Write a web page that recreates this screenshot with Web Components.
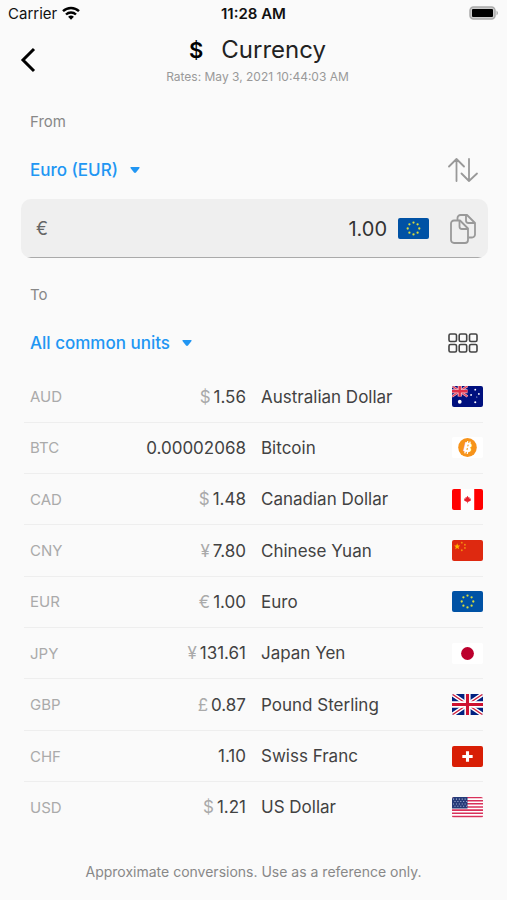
<!DOCTYPE html>
<html lang="en">
<head>
<meta charset="utf-8">
<meta name="viewport" content="width=device-width, initial-scale=1">
<title>Currency</title>
<style>
  body {
    margin: 0;
    background: #fafafa;
    color: #424242;
    font-family: Inter, "Liberation Sans", sans-serif;
    font-size: 17px;
  }
</style>
</head>
<body>
<status-bar carrier="Carrier" time="11:28 AM"></status-bar>
<page-header>
  <span slot="icon">$</span>
  Currency
  <span slot="subtitle">Rates: May 3, 2021 10:44:03 AM</span>
</page-header>
<main>
  <unit-picker label="From" unit="Euro (EUR)">
    <icon-button slot="action" icon="swap" label="Swap units"></icon-button>
    <amount-field symbol="€" value="1.00" flag="eu"></amount-field>
  </unit-picker>
  <unit-picker label="To" unit="All common units">
    <icon-button slot="action" icon="grid" label="Show keypad"></icon-button>
    <rate-table></rate-table>
  </unit-picker>
</main>
<page-footer>Approximate conversions. Use as a reference only.</page-footer>

<script>
const ICONS = {
  back: `<svg width="16" height="26" viewBox="0 0 16 26" fill="none" stroke="#000" stroke-width="3">
    <path d="M14 2 3 13l11 11"/></svg>`,
  swap: `<svg width="30" height="26" viewBox="0 0 30 26" fill="none" stroke="#999" stroke-width="1.800" stroke-linecap="round" stroke-linejoin="round">
    <path d="M8.500 24V2M1 9.500 8.500 2 16 9.500M21 2v22M13.500 16.500 21 24l8-7.500"/></svg>`,
  grid: `<svg width="30" height="20" viewBox="0 0 30 20" fill="none" stroke="#444" stroke-width="1.600">
    <rect x="1" y="1" width="7.500" height="7.500" rx="1.500"/><rect x="11.200" y="1" width="7.500" height="7.500" rx="1.500"/><rect x="21.500" y="1" width="7.500" height="7.500" rx="1.500"/>
    <rect x="1" y="11.500" width="7.500" height="7.500" rx="1.500"/><rect x="11.200" y="11.500" width="7.500" height="7.500" rx="1.500"/><rect x="21.500" y="11.500" width="7.500" height="7.500" rx="1.500"/></svg>`,
  copy: `<svg width="26" height="30" viewBox="0 0 26 30" fill="none" stroke="#999" stroke-width="1.800" stroke-linejoin="round">
    <path d="M1 9.500a3 3 0 0 1 3-3h6l8 8v11.500a3 3 0 0 1-3 3H4a3 3 0 0 1-3-3z"/>
    <path d="M9.500 6.500v6a2.500 2.500 0 0 0 2.500 2.500h6"/>
    <path d="M7.500 6V4a3 3 0 0 1 3-3H17l8 8v11.500a3 3 0 0 1-3 3h-3.500"/>
    <path d="M16 1.500v5A2.500 2.500 0 0 0 18.500 9H25"/></svg>`,
};

// evenly spaced dots that stand for the ring of stars
const ring = Array.from({ length: 8 }, (_, i) => {
  const a = (i * Math.PI) / 4;
  return `<circle cx="${(15 + 5.6 * Math.sin(a)).toFixed(2)}" cy="${(10 - 5.6 * Math.cos(a)).toFixed(2)}" r="1.1"/>`;
}).join("");

const stripes = Array.from({ length: 7 }, (_, i) => `<path d="M0 ${i * 3 + 0.5}h30"/>`).join("");

const FLAGS = {
  au: `<path fill="#00107e" d="M0 0h30v20H0z"/>
    <path stroke="#f4b8c4" stroke-width="2.400" d="M0 0l15 10M15 0 0 10"/>
    <path stroke="#e0405a" stroke-width="1.200" d="M0 0l15 10M15 0 0 10"/>
    <path stroke="#f4b8c4" stroke-width="4" d="M7.500 0v10M0 5h15"/>
    <path stroke="#e0304a" stroke-width="2.200" d="M7.500 0v10M0 5h15"/>
    <g fill="#fff"><circle cx="7.500" cy="15" r="1.800"/><circle cx="22.500" cy="3.500" r=".9"/><circle cx="18.500" cy="8.500" r=".9"/>
    <circle cx="26" cy="7.500" r=".9"/><circle cx="24" cy="10.500" r=".5"/><circle cx="22.500" cy="15.500" r="1"/></g>`,
  btc: `<path fill="#fff" d="M0 0h30v20H0z"/><circle cx="15" cy="10" r="9" fill="#f7931a"/>
    <g transform="rotate(14 15 10)"><path stroke="#fff" stroke-width="1.300" d="M13.800 4v12M16.200 4v12"/>
    <text x="15.200" y="14.200" text-anchor="middle" font-family="Inter" font-size="12" font-weight="800" fill="#fff">B</text></g>`,
  ca: `<path fill="#fff" d="M0 0h30v20H0z"/><path fill="#f00" d="M0 0h8.500v20H0zM21.500 0H30v20h-8.500z"/>
    <path fill="#e8202c" d="M15 6.500l1 1.600 1-.3-.1 1.400 1.500-.2-.4 1.200.5.500-2.300 1.400h-.9v1.400h-.6v-1.400h-.9l-2.300-1.400.5-.5-.4-1.200 1.500.2-.1-1.400 1 .3z"/>`,
  cn: `<path fill="#de2910" d="M0 0h30v20H0z"/><path fill="#ffb400" d="M5 3.200l.8 2 2.200.1-1.700 1.300.6 2.100L5 7.500 3.100 8.700l.6-2.100L2 5.300l2.200-.1z"/>
    <g fill="#f58a10"><circle cx="9.500" cy="2.500" r=".9"/><circle cx="12.500" cy="4.500" r=".9"/><circle cx="12.500" cy="7.500" r=".9"/><circle cx="9.500" cy="9.800" r=".9"/></g>`,
  eu: `<path fill="#0052a5" d="M0 0h30v20H0z"/><g fill="#d8dc3c">${ring}</g>`,
  jp: `<path fill="#fff" d="M0 0h30v20H0z"/><circle cx="15" cy="10" r="6.200" fill="#bc002d"/>`,
  gb: `<path fill="#012080" d="M0 0h30v20H0z"/>
    <path stroke="#fff" stroke-width="4" d="M0 0l30 20M30 0 0 20"/>
    <path stroke="#d0203c" stroke-width="1.300" d="M0 0l30 20M30 0 0 20"/>
    <path stroke="#fff" stroke-width="6" d="M15 0v20M0 10h30"/>
    <path stroke="#ce1130" stroke-width="3" d="M15 0v20M0 10h30"/>`,
  ch: `<path fill="#d81e05" d="M0 0h30v20H0z"/><path fill="#fff" d="M13.500 5h3v3.500H20v3h-3.500V15h-3v-3.500H10v-3h3.500z"/>`,
  us: `<path fill="#fff" d="M0 0h30v20H0z"/><g stroke="#d8305a" stroke-width="1.500">${stripes}</g>
    <path fill="#253a78" d="M0 0h15v11H0z"/>
    <path stroke="#a8b4d8" stroke-width="1" stroke-dasharray="1 1.800" d="M1 2h13M2.400 4.300h12M1 6.600h13M2.400 8.900h12"/>`,
};

const RATES = [
  { code: "AUD", symbol: "$", amount: "1.56", name: "Australian Dollar", flag: "au" },
  { code: "BTC", symbol: "", amount: "0.00002068", name: "Bitcoin", flag: "btc" },
  { code: "CAD", symbol: "$", amount: "1.48", name: "Canadian Dollar", flag: "ca" },
  { code: "CNY", symbol: "¥", amount: "7.80", name: "Chinese Yuan", flag: "cn" },
  { code: "EUR", symbol: "€", amount: "1.00", name: "Euro", flag: "eu" },
  { code: "JPY", symbol: "¥", amount: "131.61", name: "Japan Yen", flag: "jp" },
  { code: "GBP", symbol: "£", amount: "0.87", name: "Pound Sterling", flag: "gb" },
  { code: "CHF", symbol: "", amount: "1.10", name: "Swiss Franc", flag: "ch" },
  { code: "USD", symbol: "$", amount: "1.21", name: "US Dollar", flag: "us" },
];

class BaseElement extends HTMLElement {
  constructor() {
    super();
    this.attachShadow({ mode: "open" });
  }

  connectedCallback() {
    this.shadowRoot.innerHTML = this.template();
  }
}

class FlagIcon extends BaseElement {
  template() {
    return `
      <style>
        :host { display: block; flex: none; width: 31px; height: 21px; border-radius: 2px; overflow: hidden; }
        svg { display: block; width: 100%; height: 100%; }
      </style>
      <svg viewBox="0 0 30 20" preserveAspectRatio="none" aria-hidden="true">${FLAGS[this.getAttribute("code")]}</svg>
    `;
  }
}

class IconButton extends BaseElement {
  template() {
    return `
      <style>
        :host { display: block; flex: none; }
        button { display: flex; padding: 0; border: 0; background: none; cursor: pointer; }
      </style>
      <button type="button" aria-label="${this.getAttribute("label")}">${ICONS[this.getAttribute("icon")]}</button>
    `;
  }
}

class StatusBar extends BaseElement {
  template() {
    return `
      <style>
        :host {
          display: grid;
          grid-template-columns: 1fr auto 1fr;
          align-items: center;
          height: 26px;
          padding: 0 8px;
          color: #111;
          font-size: 15px;
        }
        .carrier { display: flex; align-items: center; gap: 5px; }
        .time { font-weight: 600; }
        .battery { justify-self: end; }
        svg { display: block; }
      </style>
      <div class="carrier">
        <span>${this.getAttribute("carrier")}</span>
        <svg width="18" height="14" viewBox="0 0 18 14" fill="none" stroke="#000" stroke-width="2.400" aria-hidden="true">
          <path d="M1 5.200a11.500 11.500 0 0 1 16 0M4 8.500a7.200 7.200 0 0 1 10 0"/>
          <path d="M9 13.800l-2.900-3a4.200 4.200 0 0 1 5.800 0z" fill="#000" stroke="none"/>
        </svg>
      </div>
      <div class="time">${this.getAttribute("time")}</div>
      <svg class="battery" width="30" height="14" viewBox="0 0 30 14" aria-hidden="true">
        <rect x="1" y="1" width="25" height="12" rx="3.500" fill="#ccc" stroke="#aaa" stroke-width="1.500"/>
        <rect x="3" y="3" width="21" height="8" rx="1" fill="#000"/>
        <path d="M27.500 4.500q3 2.500 0 5z" fill="#aaa"/>
      </svg>
    `;
  }
}

class PageHeader extends BaseElement {
  template() {
    return `
      <style>
        :host {
          display: grid;
          grid-template-columns: 44px 1fr 36px;
          align-items: center;
          padding: 8px 8px 0;
        }
        nav { padding-left: 12px; }
        .text { display: flex; flex-direction: column; align-items: center; gap: 3px; }
        h1 {
          display: flex;
          gap: 18px;
          margin: 0;
          color: #222;
          font-size: 24px;
          font-weight: 400;
          line-height: 32px;
        }
        ::slotted([slot="icon"]) { color: #000; font-size: 22px; font-weight: 600; }
        .subtitle { color: #999; font-size: 12px; line-height: 16px; }
      </style>
      <nav><icon-button icon="back" label="Back"></icon-button></nav>
      <div class="text">
        <h1><slot name="icon"></slot><span><slot></slot></span></h1>
        <div class="subtitle"><slot name="subtitle"></slot></div>
      </div>
    `;
  }
}

class UnitPicker extends BaseElement {
  template() {
    const unit = this.getAttribute("unit");
    return `
      <style>
        :host { display: block; padding: 27px 24px 0 21px; }
        label {
          display: block;
          margin: 0 0 22px 9px;
          color: #888;
          font-size: 15px;
          line-height: 20px;
        }
        .row {
          display: flex;
          align-items: center;
          justify-content: space-between;
          height: 32px;
          margin: 0 5px 13px 9px;
        }
        .select { display: flex; align-items: center; gap: 12px; color: #2196f3; }
        select {
          appearance: none;
          padding: 0;
          border: 0;
          background: none;
          color: inherit;
          font: inherit;
          font-weight: 500;
          cursor: pointer;
        }
      </style>
      <label for="unit">${this.getAttribute("label")}</label>
      <div class="row">
        <div class="select">
          <select id="unit"><option>${unit}</option></select>
          <svg width="10" height="6" viewBox="0 0 10 6" fill="currentColor" aria-hidden="true"><path d="M1 0h8q1 0 .5 1L6 5.500q-1 .8-2 0L.5 1Q0 0 1 0z"/></svg>
        </div>
        <slot name="action"></slot>
      </div>
      <slot></slot>
    `;
  }
}

class AmountField extends BaseElement {
  template() {
    return `
      <style>
        :host {
          display: flex;
          align-items: center;
          height: 59px;
          margin-right: -5px;
          padding: 0 12px 0 15px;
          border-radius: 10px;
          background: linear-gradient(#aaa, #aaa) bottom / 100% 1px no-repeat #efefef;
        }
        label { color: #666; font-size: 18px; }
        input {
          flex: 1;
          min-width: 0;
          padding: 0;
          border: 0;
          outline: 0;
          background: none;
          color: #333;
          font: inherit;
          font-size: 20px;
          text-align: right;
        }
        flag-icon { margin: 0 21px 0 11px; }
      </style>
      <label for="amount">${this.getAttribute("symbol")}</label>
      <input id="amount" type="text" inputmode="decimal" value="${this.getAttribute("value")}">
      <flag-icon code="${this.getAttribute("flag")}"></flag-icon>
      <icon-button icon="copy" label="Copy amount"></icon-button>
    `;
  }
}

class RateTable extends BaseElement {
  template() {
    const rows = RATES.map((rate) => `
      <tr>
        <th scope="row">${rate.code}</th>
        <td class="amount"><span>${rate.symbol}</span>${rate.amount}</td>
        <td class="name">${rate.name}</td>
        <td class="flag"><flag-icon code="${rate.flag}"></flag-icon></td>
      </tr>`).join("");
    return `
      <style>
        :host { display: block; padding-left: 3px; }
        table { width: 100%; height: 460px; table-layout: fixed; border-collapse: collapse; }
        tr + tr { border-top: 1px solid #eee; }
        th, td { padding: 0; }
        th {
          width: 66px;
          padding-left: 6px;
          color: #aaa;
          font-size: 15px;
          font-weight: 400;
          text-align: left;
        }
        .amount { width: 150px; text-align: right; }
        .amount span { margin-right: 3px; color: #aaa; }
        .name { padding-left: 15px; }
        .flag { width: 31px; }
      </style>
      <table><tbody>${rows}</tbody></table>
    `;
  }
}

class PageFooter extends BaseElement {
  template() {
    return `
      <style>
        :host {
          display: block;
          padding: 30px 24px 16px;
          color: #888;
          font-size: 14px;
          line-height: 20px;
          text-align: center;
        }
      </style>
      <slot></slot>
    `;
  }
}

customElements.define("flag-icon", FlagIcon);
customElements.define("icon-button", IconButton);
customElements.define("status-bar", StatusBar);
customElements.define("page-header", PageHeader);
customElements.define("unit-picker", UnitPicker);
customElements.define("amount-field", AmountField);
customElements.define("rate-table", RateTable);
customElements.define("page-footer", PageFooter);
</script>
</body>
</html>
